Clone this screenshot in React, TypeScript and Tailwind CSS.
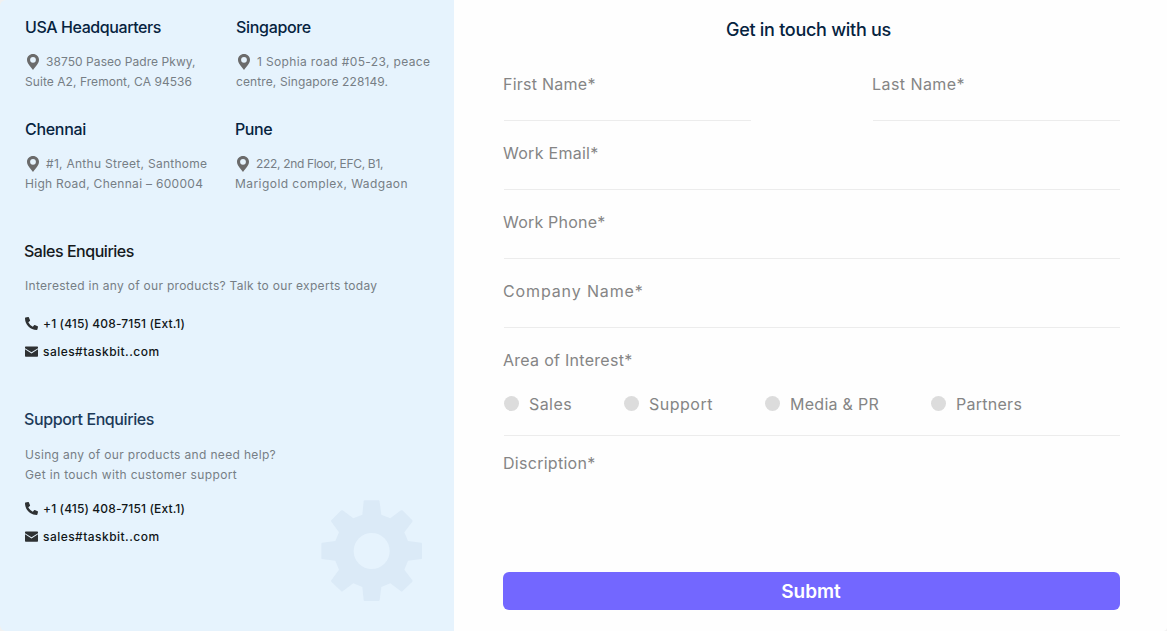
import { FaPhoneAlt } from "react-icons/fa";

const label = "text-base leading-6 text-[#858585]";
const body = "text-xs leading-5 text-[#767e85] whitespace-nowrap";
const heading = "text-base leading-6 font-medium whitespace-nowrap";

function Pin() {
  return (
    <svg viewBox="0 0 12 16" className="ml-[2px] mt-[2px] h-4 w-3 shrink-0" fill="#6b6b6b">
      <path fillRule="evenodd" d="M6 0C2.600 0 0 2.500 0 5.800 0 9.600 3.600 12.600 6 16c2.400-3.400 6-6.400 6-10.200C12 2.500 9.400 0 6 0Zm0 2.900a2.900 2.900 0 1 1 0 5.800 2.900 2.900 0 0 1 0-5.800Z" />
    </svg>
  );
}

function Mail() {
  return (
    <svg viewBox="0 0 13 11" className="-mt-px h-[11px] w-[13px] shrink-0" fill="#2e3133">
      <path d="M.7.5h11.600a.7.7 0 0 1 .7.7v1L6.500 6.300 0 2.200v-1a.7.7 0 0 1 .7-.7Z" />
      <path d="M0 3.200 6.500 7.400 13 3.200v6.900a.7.7 0 0 1-.7.7H.7a.7.7 0 0 1-.7-.7Z" />
    </svg>
  );
}

type OfficeProps = { city: string; cityClass: string; first: string; firstClass: string; second: string; secondClass: string };

function Office({ city, cityClass, first, firstClass, second, secondClass }: OfficeProps) {
  return (
    <div>
      <h3 className={`${heading} text-[#06233f] ${cityClass}`}>{city}</h3>
      <div className="mt-[13px] flex h-5">
        <Pin />
        <span className={`ml-[7px] ${body} ${firstClass}`}>{first}</span>
      </div>
      <p className={`${body} ${secondClass}`}>{second}</p>
    </div>
  );
}

function Contacts() {
  return (
    <div className="flex flex-col gap-2 text-xs leading-5 font-medium text-[#111618]">
      <div className="flex items-center gap-[5px]">
        <FaPhoneAlt className="-mt-px h-[13px] w-[13px] text-[#2e3133]" />
        <span className="tracking-[0.13px]">+1 (415) 408-7151 (Ext.1)</span>
      </div>
      <div className="flex items-center gap-[5px]">
        <Mail />
        <span className="tracking-[0.46px]">sales#taskbit..com</span>
      </div>
    </div>
  );
}

function Gear() {
  return (
    <svg viewBox="64 60 304 304" className="absolute left-[321.33px] top-[500px] h-[101.33px] w-[101.33px]" fill="#dbeaf7">
      <path fillRule="evenodd" d="M195 61H237Q239 61 239.500 63L245 104 272 115 304 91Q306 90 308 91L338 121Q339 123 338 125L314 157 325 183 365 188Q367 189 367 191V235Q367 237 365 237L325 242 314 269 338 301Q339 303 338 305L308 334Q306 336 304 334L272 310 245 321 240 361Q239 363 237 363H195Q193 363 192 361L188 321 161 310 129 334Q127 336 125 334L95 305Q93 303 95 301L118 269 107 242 67 237Q65 237 65 235V191Q65 189 67 188L107 183 118 157 95 125Q93 123 95 121L125 91Q127 90 129 91L161 115 188 104 192 63Q193 61 195 61ZM216 159a54 54 0 1 0 0 108 54 54 0 0 0 0-108Z" />
    </svg>
  );
}

function Field({ text, track }: { text: string; track: string }) {
  return (
    <label className="flex h-[69px] flex-col">
      <span className={`${label} ${track}`}>{text}</span>
      <input className="ml-px h-[25px] border-b border-[#ececec] bg-transparent outline-none" />
    </label>
  );
}

const options = [
  { text: "Sales", className: "w-[120px]", track: "tracking-[0.42px]" },
  { text: "Support", className: "w-[141px]", track: "tracking-[0.51px]" },
  { text: "Media & PR", className: "w-[166px]", track: "tracking-[0.27px]" },
  { text: "Partners", className: "", track: "tracking-[0.27px]" },
];

export default function App() {
  return (
    <div className="flex h-[631px] w-[1167px] overflow-hidden bg-[#f1f1f1] font-['Inter',sans-serif]">
      <aside className="relative w-[454px] shrink-0 rounded-l-[6px] bg-[#e6f3fd] pl-[25px] pt-[15px]">
        <div className="grid grid-cols-[210px_1fr] gap-y-[25px]">
          <Office city="USA Headquarters" cityClass="tracking-[-0.42px]" first="38750 Paseo Padre Pkwy," firstClass="tracking-[0.06px]" second="Suite A2, Fremont, CA 94536" secondClass="tracking-[0.06px]" />
          <div className="pl-px">
            <Office city="Singapore" cityClass="tracking-[-0.32px]" first="1 Sophia road #05-23, peace" firstClass="tracking-[0.36px]" second="centre, Singapore 228149." secondClass="tracking-[0.11px]" />
          </div>
          <Office city="Chennai" cityClass="tracking-[-0.3px]" first="#1, Anthu Street, Santhome" firstClass="tracking-[0.28px]" second="High Road, Chennai – 600004" secondClass="tracking-[0.29px]" />
          <Office city="Pune" cityClass="tracking-[-0.45px]" first="222, 2nd Floor, EFC, B1," firstClass="tracking-[-0.33px]" second="Marigold complex, Wadgaon" secondClass="tracking-[0.44px]" />
        </div>
        <section className="mt-[45px]">
          <h3 className={`-ml-px ${heading} tracking-[-0.47px] text-[#15191c]`}>Sales Enquiries</h3>
          <p className={`mb-[18px] mt-[13px] ${body} tracking-[0.29px]`}>Interested in any of our products? Talk to our experts today</p>
          <Contacts />
        </section>
        <section className="mt-[45px]">
          <h3 className={`-ml-px ${heading} tracking-[-0.4px] text-[#1c3a59]`}>Support Enquiries</h3>
          <p className={`mt-[14px] ${body} tracking-[0.34px]`}>Using any of our products and need help?</p>
          <p className={`mb-[14px] ${body} tracking-[0.36px]`}>Get in touch with customer support</p>
          <Contacts />
        </section>
        <Gear />
      </aside>
      <main className="flex grow flex-col rounded-br-[4px] bg-[#fefefe] pl-[49px] pr-[47px] pt-[18px]">
        <h2 className="h-[54px] pl-[223px] text-lg leading-6 font-medium tracking-[-0.28px] text-[#06233f]">Get in touch with us</h2>
        <div className="grid grid-cols-[248px_248px] justify-between">
          <Field text="First Name*" track="tracking-[0.25px]" />
          <Field text="Last Name*" track="tracking-[0.44px]" />
        </div>
        <Field text="Work Email*" track="tracking-[0.28px]" />
        <Field text="Work Phone*" track="tracking-[0.2px]" />
        <Field text="Company Name*" track="tracking-[0.87px]" />
        <span className={`${label} tracking-[0.28px]`}>Area of Interest*</span>
        <div className="ml-px mt-5 flex h-11 border-b border-[#ececec]">
          {options.map((o) => (
            <div key={o.text} className={`flex h-6 gap-[10px] ${o.className}`}>
              <span className="mt-1 h-[15px] w-[15px] shrink-0 rounded-full bg-[#dcdcdc]" />
              <span className={`${label} whitespace-nowrap ${o.track}`}>{o.text}</span>
            </div>
          ))}
        </div>
        <span className={`mt-[15px] h-[121px] ${label} tracking-[0.28px]`}>Discription*</span>
        <button className="h-[38px] rounded-md bg-[#7367ff] pr-px pt-px text-[19px] leading-[37px] font-semibold text-white">Submt</button>
      </main>
    </div>
  );
}
